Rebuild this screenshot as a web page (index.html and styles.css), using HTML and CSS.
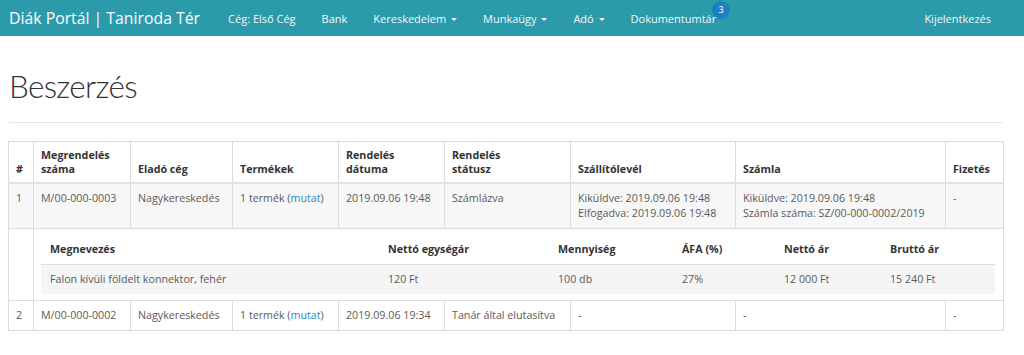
FILE: index.html
```html
<!DOCTYPE html>
<html lang="hu">
<head>
    <meta charset="UTF-8">
    <title>Beszerzés</title>
    <link rel="stylesheet" href="styles.css">
</head>
<body>
    <nav class="navbar">
        <a class="brand" href="#">Diák Portál | Taniroda Tér</a>
        <ul class="nav-links">
            <li><a href="#">Cég: Első Cég</a></li>
            <li><a href="#">Bank</a></li>
            <li><a href="#">Kereskedelem <span class="caret"></span></a></li>
            <li><a href="#">Munkaügy <span class="caret"></span></a></li>
            <li><a href="#">Adó <span class="caret"></span></a></li>
            <li><a href="#"><span class="badge-wrap">Dokumentumtár<span class="badge">3</span></span></a></li>
        </ul>
        <a class="logout" href="#">Kijelentkezés</a>
    </nav>

    <div class="page">
        <h1>Beszerzés</h1>
        <hr>

        <table class="orders">
            <colgroup>
                <col style="width: 25px">
                <col style="width: 97px">
                <col style="width: 102px">
                <col style="width: 106px">
                <col style="width: 106px">
                <col style="width: 126px">
                <col style="width: 165px">
                <col style="width: 210px">
                <col style="width: 58px">
            </colgroup>
            <thead>
                <tr>
                    <th>#</th>
                    <th>Megrendelés<br>száma</th>
                    <th>Eladó cég</th>
                    <th>Termékek</th>
                    <th>Rendelés<br>dátuma</th>
                    <th>Rendelés<br>státusz</th>
                    <th>Szállítólevél</th>
                    <th>Számla</th>
                    <th>Fizetés</th>
                </tr>
            </thead>
            <tbody>
                <tr class="striped">
                    <td>1</td>
                    <td>M/00-000-0003</td>
                    <td>Nagykereskedés</td>
                    <td>1 termék (<a href="#">mutat</a>)</td>
                    <td>2019.09.06 19:48</td>
                    <td>Számlázva</td>
                    <td>Kiküldve: 2019.09.06 19:48<br>Elfogadva: 2019.09.06 19:48</td>
                    <td>Kiküldve: 2019.09.06 19:48<br>Számla száma: SZ/00-000-0002/2019</td>
                    <td>-</td>
                </tr>
                <tr class="details">
                    <td></td>
                    <td colspan="8">
                        <table class="items">
                            <colgroup>
                                <col style="width: 338px">
                                <col style="width: 170px">
                                <col style="width: 124px">
                                <col style="width: 102px">
                                <col style="width: 106px">
                                <col>
                            </colgroup>
                            <thead>
                                <tr>
                                    <th>Megnevezés</th>
                                    <th>Nettó egységár</th>
                                    <th>Mennyiség</th>
                                    <th>ÁFA (%)</th>
                                    <th>Nettó ár</th>
                                    <th>Bruttó ár</th>
                                </tr>
                            </thead>
                            <tbody>
                                <tr>
                                    <td>Falon kívüli földelt konnektor, fehér</td>
                                    <td>120 Ft</td>
                                    <td>100 db</td>
                                    <td>27%</td>
                                    <td>12 000 Ft</td>
                                    <td>15 240 Ft</td>
                                </tr>
                            </tbody>
                        </table>
                    </td>
                </tr>
                <tr>
                    <td>2</td>
                    <td>M/00-000-0002</td>
                    <td>Nagykereskedés</td>
                    <td>1 termék (<a href="#">mutat</a>)</td>
                    <td>2019.09.06 19:34</td>
                    <td>Tanár által elutasítva</td>
                    <td>-</td>
                    <td>-</td>
                    <td>-</td>
                </tr>
            </tbody>
        </table>
    </div>
</body>
</html>
```

FILE: styles.css
```css
body {
    margin: 0;
    font-family: "Open Sans", "Liberation Sans", sans-serif;
    font-size: 10.7px;
    color: #5a5a5a;
    background-color: white;
}

a {
    text-decoration: none;
}

/* Top navigation */
.navbar {
    display: flex;
    align-items: center;
    height: 36px;
    padding: 0 9px;
    background-color: #2b9aab;
}

.brand {
    color: white;
    font-size: 15.8px;
    margin-right: 15px;
}

.nav-links {
    display: flex;
    list-style: none;
    margin: 0;
    padding: 0;
}

.nav-links a,
.logout {
    display: block;
    color: #f2f8fa;
    font-size: 11px;
    padding: 0 13px;
}

.badge-wrap {
    position: relative;
}

.badge {
    position: absolute;
    top: -10px;
    right: -14px;
    width: 18px;
    height: 18px;
    border-radius: 50%;
    background-color: #1d80c3;
    color: white;
    font-size: 9px;
    line-height: 18px;
    text-align: center;
}

.caret {
    display: inline-block;
    width: 0;
    height: 0;
    margin-left: 2px;
    vertical-align: middle;
    border-top: 3.5px solid #f2f8fa;
    border-left: 3.5px solid transparent;
    border-right: 3.5px solid transparent;
}

.logout {
    margin-left: auto;
    padding-right: 24px;
}

/* Page */
.page {
    width: 995px;
    padding: 0 8px;
}

h1 {
    margin: 32px 0 0 1px;
    font-family: Lato, "Open Sans", sans-serif;
    font-size: 31.5px;
    font-weight: 300;
    letter-spacing: -0.7px;
    line-height: 36px;
    color: #333;
}

hr {
    margin: 18px 0 18px 1px;
    border: 0;
    border-top: 1px solid #e6e6e6;
}

/* Orders table */
.orders {
    width: 995px;
    table-layout: fixed;
    border-collapse: collapse;
    border: 1px solid #ddd;
}

.orders > thead > tr > th,
.orders > tbody > tr > td {
    border: 1px solid #ddd;
    text-align: left;
    vertical-align: top;
    line-height: 15px;
    padding: 7px 7px;
}

.orders > thead > tr > th {
    vertical-align: bottom;
    color: #333;
    line-height: 14px;
    padding: 6px 7px;
    border-bottom: 2px solid #e2e2e2;
}

.orders > tbody > tr.striped > td {
    background-color: #f7f7f7;
}

.orders a {
    color: #2a8bc0;
}

.orders > tbody > tr.details > td {
    padding: 6px 8px 6px 7px;
}

/* Nested product table */
.items {
    width: 100%;
    table-layout: fixed;
    border-collapse: collapse;
}

.items th,
.items td {
    text-align: left;
    line-height: 15px;
    padding: 7px 9px;
}

.items th {
    color: #333;
    border-bottom: 1px solid #ddd;
}

.items td {
    background-color: #f5f5f5;
}
```
